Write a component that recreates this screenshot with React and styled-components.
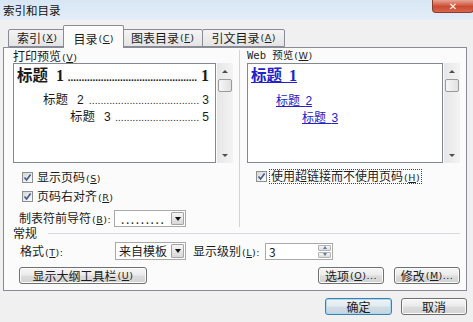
import styled, { createGlobalStyle } from "styled-components";

const UI_FONT = `"Noto Sans CJK SC", "Noto Sans", sans-serif`;

const GlobalStyle = createGlobalStyle`
  html, body { margin: 0; padding: 0; background: #f0f0f0; }
  body { font-family: ${UI_FONT}; font-size: 12px; color: #1b1b1b; }
  * { box-sizing: border-box; }
`;

const Window = styled.div`
  width: 473px;
  height: 322px;
  display: flex;
  flex-direction: column;
  background: #f0f0f0;
  overflow: hidden;
`;

const TitleBar = styled.div`
  height: 20px;
  display: flex;
  justify-content: space-between;
  align-items: flex-start;
  background: linear-gradient(#d8e6f4, #e3edf8);
`;

const Title = styled.div`
  padding: 2px 0 0 3px;
  font-size: 11.5px;
  line-height: 17px;
  color: #111;
`;

const CloseBtn = styled.div`
  width: 42px;
  height: 13px;
  margin-right: -1px;
  border: 1px solid #8d3b2e;
  border-top: none;
  border-radius: 0 0 4px 4px;
  background: linear-gradient(#e8a595, #cb4a30 55%, #d8664f);
  color: #fff;
  font: bold 10px "DejaVu Sans", sans-serif;
  display: flex;
  align-items: center;
  justify-content: center;
`;

const Body = styled.div`
  flex: 1;
  display: flex;
  flex-direction: column;
  padding: 0 6px 0 3px;
`;

const TabStrip = styled.div`
  height: 27px;
  display: flex;
  align-items: flex-end;
  padding-left: 5px;
`;

const Tab = styled.div`
  position: relative;
  z-index: ${(p) => (p.$active ? 1 : 0)};
  height: ${(p) => (p.$active ? "23px" : "18px")};
  margin: ${(p) => (p.$active ? "0 -2px -1px -2px" : "0 -1px 0 0")};
  padding: ${(p) => (p.$active ? "0 9px 3px" : "0 8px 2px")};
  display: flex;
  align-items: flex-end;
  line-height: 13px;
  border: 1px solid #898c95;
  border-bottom: ${(p) => (p.$active ? "none" : "1px solid #898c95")};
  border-radius: 2px 2px 0 0;
  background: ${(p) =>
    p.$active ? "#fbfbfb" : "linear-gradient(#f4f4f4, #e4e4e4)"};
`;

const Acc = styled.span`
  font-family: "DejaVu Sans", sans-serif;
  font-size: 9.5px;
  letter-spacing: 0.5px;
  margin-left: 1px;
  u { text-underline-offset: 1px; }
`;

const Key = ({ k, tail = "" }) => (
  <Acc>
    (<u>{k}</u>){tail}
  </Acc>
);

const Panel = styled.div`
  height: 244px;
  border: 1px solid #898c95;
  background: #fbfbfb;
  padding: 0 6px 0 9px;
  display: flex;
  flex-direction: column;
`;

const TopGrid = styled.div`
  display: grid;
  grid-template-columns: 226px 1px 1fr;
`;

const Column = styled.div`
  display: flex;
  flex-direction: column;
  padding-left: ${(p) => p.$pad || 0}px;
`;

const Divider = styled.div`
  margin-top: 2px;
  background: #d3d3d3;
`;

const FieldLabel = styled.div`
  margin-top: 1px;
  height: 13px;
  line-height: 13px;
  font-family: ${(p) => (p.$mono ? `"DejaVu Sans Mono", ${UI_FONT}` : UI_FONT)};
  font-size: ${(p) => (p.$mono ? "10.5px" : "12px")};
`;

const Preview = styled.div`
  margin-top: 1px;
  width: ${(p) => p.$w}px;
  height: 100px;
  display: flex;
  gap: 1px;
`;

const Paper = styled.div`
  flex: 1;
  background: #fff;
  border: 1px solid #828790;
  padding: 0 6px 0 ${(p) => p.$pad}px;
`;

const ScrollBar = styled.div`
  width: 16px;
  display: flex;
  flex-direction: column;
  background: linear-gradient(90deg, #e7e7e7, #f3f3f3);
`;

const ScrollArrow = styled.div`
  height: 16px;
  display: flex;
  align-items: center;
  justify-content: center;

  &::before {
    content: "";
    border-left: 3px solid transparent;
    border-right: 3px solid transparent;
    border-${(p) => (p.$down ? "top" : "bottom")}: 3px solid #4d4d4d;
  }
`;

const ScrollThumb = styled.div`
  height: 13px;
  margin: 0 1px;
  border: 1px solid #9a9a9a;
  border-radius: 2px;
  background: linear-gradient(90deg, #f6f6f6, #e1e1e1);
`;

const ScrollGap = styled.div`
  flex: 1;
`;

const TocLine = styled.div`
  display: flex;
  align-items: baseline;
  height: ${(p) => p.$h}px;
  line-height: ${(p) => p.$h}px;
  margin-top: ${(p) => p.$mt}px;
  padding-left: ${(p) => p.$indent}px;
  font-weight: ${(p) => (p.$big ? 700 : 400)};
  font-size: ${(p) => (p.$big ? "15.5px" : "12.5px")};
  white-space: nowrap;
`;

const TocNum = styled.span`
  margin-left: ${(p) => p.$gap || 0}px;
  font-family: ${(p) =>
    p.$big ? `"Liberation Serif", serif` : `"Liberation Sans", sans-serif`};
  font-size: ${(p) => (p.$big ? "16px" : "12px")};
`;

const Leader = styled.span`
  flex: 1;
  text-align: right;
  margin: 0 ${(p) => (p.$big ? 4 : 3)}px 0 3px;
  font-family: "Liberation Serif", serif;
  font-size: ${(p) => (p.$big ? "11px" : "10px")};
  letter-spacing: ${(p) => (p.$big ? "0" : "0.4px")};
`;

const LinkLine = styled.div`
  height: ${(p) => p.$h}px;
  line-height: ${(p) => p.$h}px;
  margin-top: ${(p) => p.$mt}px;
  padding-left: ${(p) => p.$indent}px;
  color: #2222c6;
  font-weight: ${(p) => (p.$big ? 700 : 400)};
  font-size: ${(p) => (p.$big ? "15.5px" : "12px")};
  white-space: nowrap;

  & > span {
    text-decoration: underline;
    text-underline-offset: 1px;
  }
`;

const LinkNum = styled.span`
  font-family: ${(p) =>
    p.$big ? `"Liberation Serif", serif` : `"Liberation Sans", sans-serif`};
  font-size: ${(p) => (p.$big ? "16px" : "12px")};
`;

const CheckRow = styled.div`
  display: flex;
  align-items: center;
  gap: ${(p) => p.$gap || 4}px;
  height: 14px;
  margin-top: ${(p) => p.$mt}px;
  padding-left: 9px;
  line-height: 13px;
`;

const Box = styled.span`
  width: 11px;
  height: 11px;
  border: 1px solid #8e8f8f;
  background: linear-gradient(135deg, #d6d6d6, #fdfdfd);
  display: flex;
  align-items: center;
  justify-content: center;
`;

const FocusText = styled.span`
  border: 1px dotted #444;
  padding: 0 1px;
  line-height: 11px;
`;

const CheckBox = () => (
  <Box>
    <svg width="9" height="9" viewBox="0 0 9 9">
      <path d="M1.5 4.5 L3.6 7 L7.6 1.5" fill="none" stroke="#41598c" strokeWidth="1.6" />
    </svg>
  </Box>
);

const FieldRow = styled.div`
  display: flex;
  align-items: center;
  height: ${(p) => p.$h}px;
  margin-top: ${(p) => p.$mt}px;
  padding-left: ${(p) => p.$pad}px;
  line-height: 13px;
`;

const FieldName = styled.span`
  width: ${(p) => p.$w}px;
  margin-left: ${(p) => p.$ml || 0}px;
  flex-shrink: 0;
`;

const Combo = styled.div`
  width: ${(p) => p.$w}px;
  height: 100%;
  display: flex;
  background: #fff;
  border: 1px solid #a9a9a9;
`;

const ComboText = styled.span`
  flex: 1;
  padding-left: ${(p) => p.$pad}px;
  line-height: 15px;
  letter-spacing: ${(p) => p.$ls || "0"};
  white-space: nowrap;
`;

const DropBtn = styled.span`
  width: 13px;
  margin: 1px;
  border: 1px solid #a3a3a3;
  border-radius: 1px;
  background: linear-gradient(#f5f5f5, #d8d8d8);
  display: flex;
  align-items: center;
  justify-content: center;

  &::before {
    content: "";
    border-left: 3.5px solid transparent;
    border-right: 3.5px solid transparent;
    border-top: 4px solid #111;
  }
`;

const Spin = styled.div`
  width: 68px;
  height: 17px;
  margin-left: 3px;
  display: flex;
  background: #fff;
  border: 1px solid #a9a9a9;
`;

const SpinBtns = styled.div`
  width: 13px;
  margin: 1px;
  display: flex;
  flex-direction: column;
  gap: 1px;
`;

const SpinBtn = styled.span`
  flex: 1;
  border: 1px solid #b4b4b4;
  border-radius: 1px;
  background: linear-gradient(#f6f6f6, #dcdcdc);
  display: flex;
  align-items: center;
  justify-content: center;

  &::before {
    content: "";
    border-left: 2.5px solid transparent;
    border-right: 2.5px solid transparent;
    border-${(p) => (p.$down ? "top" : "bottom")}: 3px solid #5c7aa6;
  }
`;

const GroupHead = styled.div`
  display: flex;
  align-items: center;
  height: 12px;
  line-height: 12px;
`;

const GroupLine = styled.span`
  flex: 1;
  height: 1px;
  margin-left: 11px;
  background: #d6dbe0;
`;

const ButtonRow = styled.div`
  display: flex;
  justify-content: space-between;
  margin-top: 7px;
  padding-left: 6px;
`;

const ButtonGroup = styled.div`
  display: flex;
  gap: 10px;
`;

const Button = styled.div`
  width: ${(p) => p.$w}px;
  height: 17px;
  border: 1px solid ${(p) => (p.$default ? "#3c7fb1" : "#707070")};
  border-radius: 3px;
  background: ${(p) =>
    p.$default
      ? "linear-gradient(#eef4f8, #e2ebf1 48%, #d2dde5 52%, #c8d4de)"
      : "linear-gradient(#f6f6f6, #ebebeb 48%, #dddddd 52%, #d2d2d2)"};
  box-shadow: inset 0 0 0 1px ${(p) => (p.$default ? "#a9d8f3" : "#fbfbfb")};
  display: flex;
  align-items: center;
  justify-content: center;
  line-height: 14px;
  white-space: nowrap;
`;

const Footer = styled.div`
  display: flex;
  justify-content: flex-end;
  gap: 9px;
  margin-top: 7px;
`;

const tocLines = [
  { num: "2", page: "3", indent: 26, mt: 7, dots: 38 },
  { num: "3", page: "5", indent: 53, mt: 1, dots: 29 },
];

const linkLines = [
  { num: "2", indent: 25, mt: 8 },
  { num: "3", indent: 51, mt: 1 },
];

export default function App() {
  return (
    <>
      <GlobalStyle />
      <Window>
        <TitleBar>
          <Title>索引和目录</Title>
          <CloseBtn>✕</CloseBtn>
        </TitleBar>
        <Body>
          <TabStrip>
            <Tab>索引<Key k="X" /></Tab>
            <Tab $active>目录<Key k="C" /></Tab>
            <Tab>图表目录<Key k="F" /></Tab>
            <Tab>引文目录<Key k="A" /></Tab>
          </TabStrip>
          <Panel>
            <TopGrid>
              <Column>
                <FieldLabel>打印预览<Key k="V" /></FieldLabel>
                <Preview $w={220}>
                  <Paper $pad={3}>
                    <TocLine $big $h={20} $mt={0} $indent={0}>
                      标题<TocNum $big $gap={8}>1</TocNum>
                      <Leader $big>{".".repeat(47)}</Leader>
                      <TocNum $big>1</TocNum>
                    </TocLine>
                    {tocLines.map((l) => (
                      <TocLine key={l.num} $h={16} $mt={l.mt} $indent={l.indent}>
                        标题<TocNum $gap={9}>{l.num}</TocNum>
                        <Leader>{".".repeat(l.dots)}</Leader>
                        <TocNum>{l.page}</TocNum>
                      </TocLine>
                    ))}
                  </Paper>
                  <ScrollBar>
                    <ScrollArrow />
                    <ScrollThumb />
                    <ScrollGap />
                    <ScrollArrow $down />
                  </ScrollBar>
                </Preview>
                <CheckRow $mt={7}>
                  <CheckBox />
                  <span>显示页码<Key k="S" /></span>
                </CheckRow>
                <CheckRow $mt={5}>
                  <CheckBox />
                  <span>页码右对齐<Key k="R" /></span>
                </CheckRow>
                <FieldRow $h={17} $mt={7} $pad={6}>
                  <FieldName $w={95}>制表符前导符<Key k="B" tail=":" /></FieldName>
                  <Combo $w={72}>
                    <ComboText $pad={6} $ls="1.6px">.........</ComboText>
                    <DropBtn />
                  </Combo>
                </FieldRow>
              </Column>
              <Divider />
              <Column $pad={7}>
                <FieldLabel $mono>Web 预览<Key k="W" /></FieldLabel>
                <Preview $w={213}>
                  <Paper $pad={3}>
                    <LinkLine $big $h={20} $mt={0} $indent={0}>
                      <span>
                        标题{"\u00a0\u00a0"}<LinkNum $big>1</LinkNum>
                      </span>
                    </LinkLine>
                    {linkLines.map((l) => (
                      <LinkLine key={l.num} $h={16} $mt={l.mt} $indent={l.indent}>
                        <span>
                          标题{"\u00a0\u00a0"}<LinkNum>{l.num}</LinkNum>
                        </span>
                      </LinkLine>
                    ))}
                  </Paper>
                  <ScrollBar>
                    <ScrollArrow />
                    <ScrollThumb />
                    <ScrollGap />
                    <ScrollArrow $down />
                  </ScrollBar>
                </Preview>
                <CheckRow $mt={6} $gap={2}>
                  <CheckBox />
                  <FocusText>使用超链接而不使用页码<Key k="H" /></FocusText>
                </CheckRow>
              </Column>
            </TopGrid>
            <GroupHead>
              常规
              <GroupLine />
            </GroupHead>
            <FieldRow $h={18} $mt={3} $pad={7}>
              <FieldName $w={95}>格式<Key k="T" tail=":" /></FieldName>
              <Combo $w={71}>
                <ComboText $pad={3}>来自模板</ComboText>
                <DropBtn />
              </Combo>
              <FieldName $w={69} $ml={7}>显示级别<Key k="L" tail=":" /></FieldName>
              <Spin>
                <ComboText $pad={3}>3</ComboText>
                <SpinBtns>
                  <SpinBtn />
                  <SpinBtn $down />
                </SpinBtns>
              </Spin>
            </FieldRow>
            <ButtonRow>
              <Button $w={128}>显示大纲工具栏<Key k="U" /></Button>
              <ButtonGroup>
                <Button $w={66}>选项<Key k="O" tail="..." /></Button>
                <Button $w={66}>修改<Key k="M" tail="..." /></Button>
              </ButtonGroup>
            </ButtonRow>
          </Panel>
          <Footer>
            <Button $w={67} $default>确定</Button>
            <Button $w={66}>取消</Button>
          </Footer>
        </Body>
      </Window>
    </>
  );
}
